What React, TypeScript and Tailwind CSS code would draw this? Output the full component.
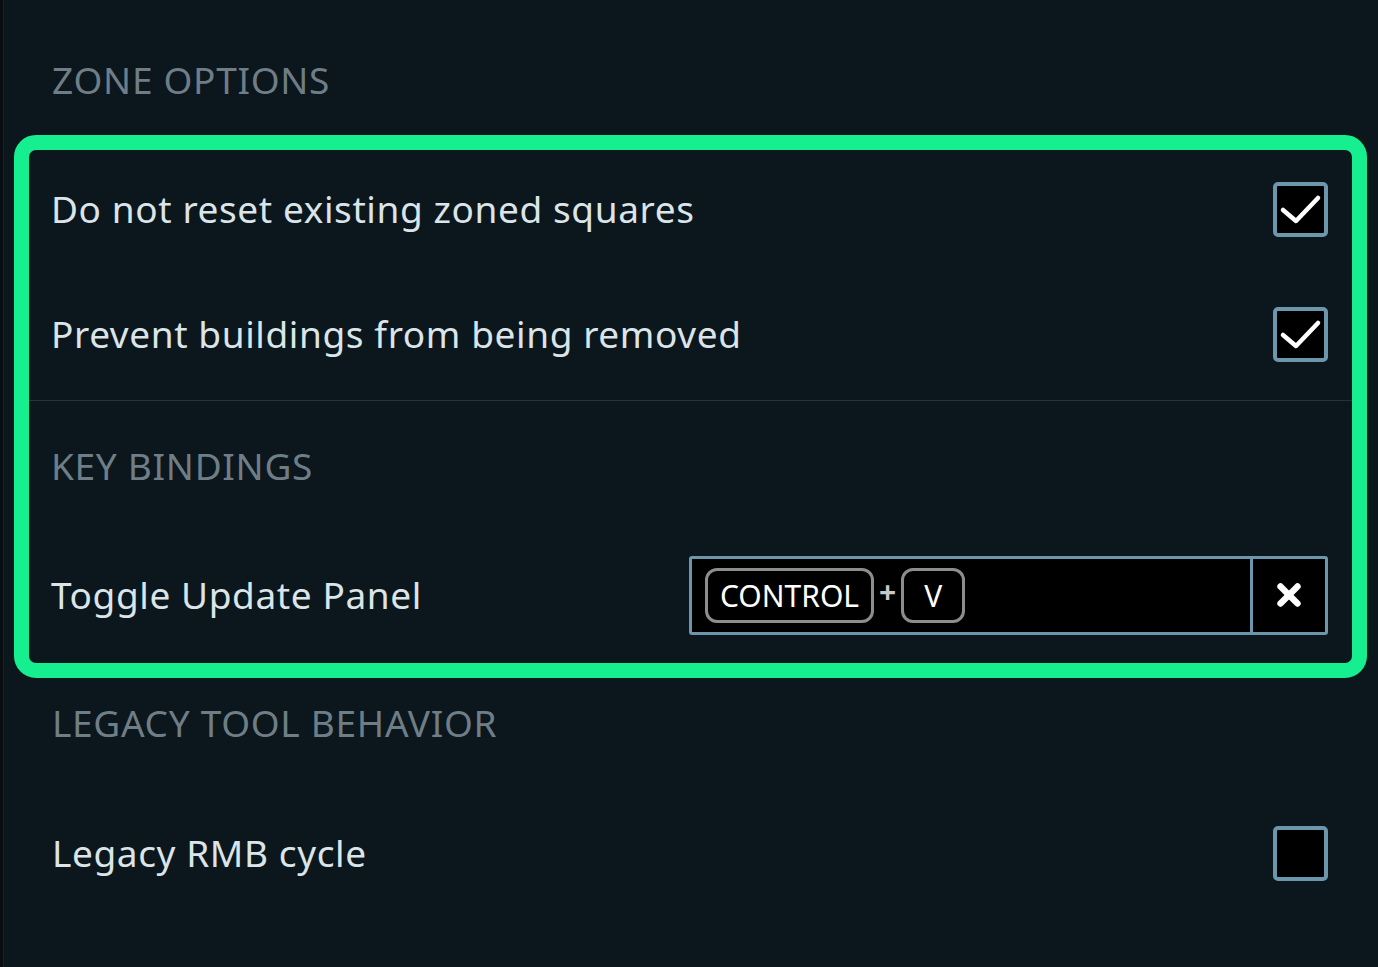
import { X } from 'lucide-react';

const font = { fontFamily: '"Noto Sans", "DejaVu Sans", sans-serif' };

function Checkbox({ checked }: { checked: boolean }) {
  return (
    <div className="w-[55px] h-[55px] border-[4px] border-[#6b96ab] rounded-[5px] bg-black flex items-center justify-center">
      {checked && (
        <svg width="47" height="47" viewBox="0 0 47 47" fill="none">
          <path
            d="M6 24 L19 35 L41 12"
            stroke="white"
            strokeWidth="4.5"
            strokeLinecap="round"
            strokeLinejoin="round"
          />
        </svg>
      )}
    </div>
  );
}

function SectionHeader({ label, className }: { label: string; className: string }) {
  return (
    <div className={`flex items-center text-[37px] uppercase tracking-[0.7px] text-[#6f7e86] ${className}`}>
      {label}
    </div>
  );
}

function OptionRow({ label, checked, className }: { label: string; checked: boolean; className: string }) {
  return (
    <div className={`flex items-center justify-between ${className}`}>
      <span className="text-[37px] text-[#dbe5e9] tracking-[0.6px]">{label}</span>
      <Checkbox checked={checked} />
    </div>
  );
}

function KeyChip({ label, width }: { label: string; width: string }) {
  return (
    <div
      className={`${width} h-[55px] border-[3px] border-[#8d8d8d] rounded-[12px] flex items-center justify-center text-[30px] text-white`}
    >
      {label}
    </div>
  );
}

export default function App() {
  return (
    <div className="w-full h-[967px] bg-[#0b161d] flex overflow-hidden" style={font}>
      <div className="w-[4px] h-full bg-[#070d11] border-r border-[#142127]" />
      <div className="flex-1 pt-[25px] pl-[10px] pr-[11px]">
        <SectionHeader label="Zone Options" className="h-[110px] pl-[38px]" />

        <div className="border-[15px] border-[#15ef8f] rounded-[22px] flex flex-col">
          <OptionRow
            label="Do not reset existing zoned squares"
            checked
            className="h-[118px] pl-[22px] pr-[24px]"
          />
          <OptionRow
            label="Prevent buildings from being removed"
            checked
            className="h-[132px] pl-[22px] pr-[24px]"
          />
          <div className="h-px bg-[#25343b]" />
          <SectionHeader label="Key Bindings" className="h-[130px] pl-[22px]" />
          <div className="h-[128px] mb-[4px] flex items-center justify-between pl-[22px] pr-[24px]">
            <span className="text-[37px] text-[#dbe5e9] tracking-[0.6px]">Toggle Update Panel</span>
            <div className="w-[639px] h-[79px] border-[3px] border-[#6b96ab] rounded-[3px] bg-black flex">
              <div className="flex-1 flex items-center pl-[13px] gap-[5px]">
                <KeyChip label="CONTROL" width="w-[169px]" />
                <span className="text-[30px] font-bold text-[#c8c8c8] leading-none -mt-[6px]">+</span>
                <KeyChip label="V" width="w-[64px]" />
              </div>
              <div className="w-[75px] border-l-[3px] border-[#6b96ab] flex items-center justify-center">
                <X className="w-[34px] h-[34px] text-white" strokeWidth={4.5} />
              </div>
            </div>
          </div>
        </div>

        <SectionHeader label="Legacy Tool Behavior" className="h-[90px] pl-[38px]" />
        <OptionRow label="Legacy RMB cycle" checked={false} className="h-[170px] pl-[38px] pr-[39px]" />
      </div>
    </div>
  );
}
